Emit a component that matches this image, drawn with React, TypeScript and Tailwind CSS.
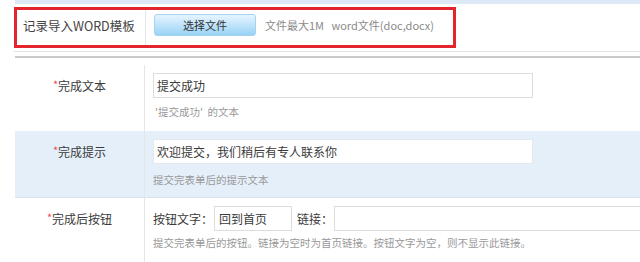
import React from "react";

const font = { fontFamily: '"Noto Sans CJK SC", "Liberation Sans", sans-serif' };

function Star() {
  return <span className="text-[#ee4b4b] text-[11px] relative -top-[2px]">*</span>;
}

export default function App() {
  return (
    <div className="w-[640px] h-[262px] bg-white overflow-hidden text-[#3a3a3a]" style={font}>
      <div className="ml-[15px] h-[4px] bg-[#dde9f6]" />
      <div className="ml-[14px] flex h-[48px] border-b border-[#e2e2e2]">
        <div className="mt-[3px] h-[41px] w-[442px] border-[3px] border-[#e3262d] flex items-stretch">
          <div className="w-[128px] pl-[6px] flex items-center text-[12.5px] text-[#444] -mt-[3px]">记录导入WORD模板</div>
          <div className="border-l border-[#e6e6e6] flex items-center pl-[8px]">
            <div className="w-[102px] h-[22px] rounded-[3px] border border-[#a5d3ef] bg-gradient-to-b from-[#e6f5fe] to-[#98d2f5] flex items-center justify-center text-[11px] text-[#333] -mt-[5px]">
              选择文件
            </div>
            <span className="ml-[9px] text-[11px] text-[#8a8a8a] -mt-[5px] whitespace-pre">文件最大1M   word文件(doc,docx)</span>
          </div>
        </div>
      </div>
      <div className="ml-[15px] mt-[4px] h-[2px] bg-[#c9c9c9]" />

      {/* Row 1 */}
      <div className="ml-[15px] flex h-[73px]">
        <div className="w-[130px] mt-[7px] border-r border-[#e6e6e6]">
          <div className="mt-[8px] h-[25px] leading-[25px] text-center text-[12px]">
            <Star />完成文本
          </div>
        </div>
        <div className="pl-[8px] pt-[15px]">
          <div className="w-[380px] h-[25px] border border-[#dcdcdc] bg-white flex items-center pl-[3px] text-[12px]">提交成功</div>
          <div className="mt-[7px] text-[10.5px] leading-[14px] text-[#999] pl-[2px] whitespace-pre">'提交成功'  的文本</div>
        </div>
      </div>

      {/* Row 2 */}
      <div className="ml-[15px] flex h-[67px] bg-[#e5eff9] border-b border-[#dbe3ec]">
        <div className="w-[130px] border-r border-[#e6e6e6]">
          <div className="mt-[8px] h-[25px] leading-[25px] text-center text-[12px]">
            <Star />完成提示
          </div>
        </div>
        <div className="pl-[8px] pt-[8px]">
          <div className="w-[380px] h-[25px] border border-[#e3e8ee] bg-white flex items-center pl-[3px] text-[12px]">欢迎提交，我们稍后有专人联系你</div>
          <div className="mt-[9px] text-[10.5px] leading-[14px] text-[#999]">提交完表单后的提示文本</div>
        </div>
      </div>

      {/* Row 3 */}
      <div className="ml-[15px] flex h-[64px]">
        <div className="w-[130px] border-r border-[#e6e6e6]">
          <div className="mt-[8px] h-[25px] leading-[25px] text-center text-[12px]">
            <Star />完成后按钮
          </div>
        </div>
        <div className="pl-[8px] pt-[8px] flex-1">
          <div className="flex items-center text-[12px]">
            <span className="w-[61px]">按钮文字：</span>
            <div className="w-[78px] h-[25px] border border-[#dcdcdc] bg-white flex items-center pl-[4px]">回到首页</div>
            <span className="ml-[5px] w-[37px]">链接：</span>
            <div className="flex-1 h-[25px] border border-[#dcdcdc] border-r-0 bg-white" />
          </div>
          <div className="mt-[5px] text-[10.5px] leading-[14px] text-[#999] whitespace-nowrap">提交完表单后的按钮。链接为空时为首页链接。按钮文字为空，则不显示此链接。</div>
        </div>
      </div>
    </div>
  );
}
